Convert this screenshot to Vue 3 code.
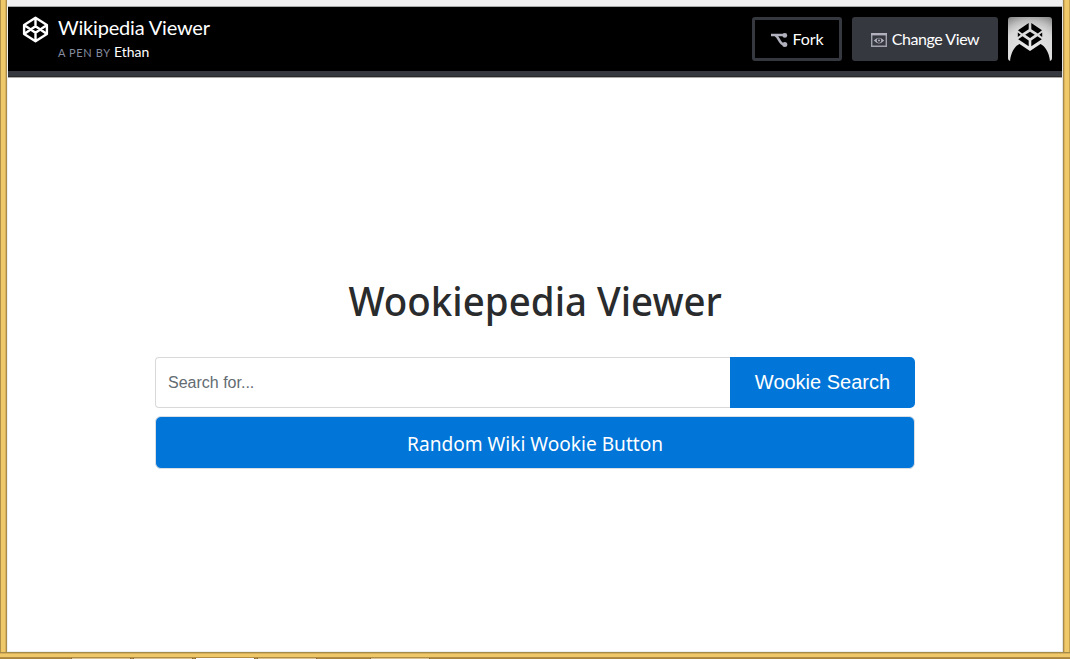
<script setup>
const tabs = [
  { gap: 64, active: false },
  { gap: 2, active: false },
  { gap: 2, active: true },
  { gap: 2, active: false },
  { gap: 53, active: false },
]
</script>

<template>
  <div class="window">
    <div class="body">
      <div class="edge left"></div>
      <div class="page">
        <div class="strip"></div>
        <header class="bar">
          <svg class="logo" width="27" height="27" viewBox="0 0 27 27">
            <path d="M13.5 1.7 L24.9 9 V18 L13.5 25.3 L2.1 18 V9 Z M2.1 9 L13.5 16.8 L24.9 9 M2.1 18 L13.5 10.2 L24.9 18 M13.5 1.7 V10.2 M13.5 16.8 V25.3" />
          </svg>
          <div class="titles">
            <div class="title">Wikipedia Viewer</div>
            <div class="byline"><span class="by">A PEN BY</span><span class="author">Ethan</span></div>
          </div>
          <button class="btn fork">
            <svg width="17" height="14" viewBox="0 0 17 14">
              <path class="wire" d="M0 2 H13 M4 2.2 C7.8 2.8 8 11 13 11.6" />
              <circle cx="13.8" cy="2.4" r="2.4" /><circle cx="13.8" cy="11.4" r="2.5" />
            </svg>
            <span>Fork</span>
          </button>
          <button class="btn view">
            <svg width="16" height="14" viewBox="0 0 16 14">
              <path class="box" d="M.7 1 H15.3 V13.2 H.7 Z" />
              <path d="M0 0 H16 V2.4 H0 Z" />
              <path class="lens" fill-rule="evenodd" d="M2.8 7.6 Q8 2 13.2 7.6 Q8 13.2 2.8 7.6 Z M8 5.3 A2.3 2.3 0 1 0 8 9.9 A2.3 2.3 0 1 0 8 5.3 Z" />
              <circle cx="8" cy="7.6" r="1" />
            </svg>
            <span>Change View</span>
          </button>
          <svg class="avatar" width="44" height="44" viewBox="0 0 44 44">
            <defs>
              <radialGradient id="glow" cx="22" cy="38" r="43" gradientUnits="userSpaceOnUse">
                <stop offset="0" stop-color="#ececec" /><stop offset=".65" stop-color="#d8d8d8" />
                <stop offset=".8" stop-color="#bdbdbd" /><stop offset="1" stop-color="#858585" />
              </radialGradient>
            </defs>
            <rect width="44" height="44" fill="url(#glow)" />
            <path d="M2 44 C3 35 7 29 11.5 27 L22 34 L32.5 27 C37 29 41 35 42 44 Z" />
            <path d="M20.7 6 V12.2 L14.2 16.5 L10 13.3 Z M23.3 6 V12.2 L29.8 16.5 L34 13.3 Z M9.8 15.4 L12.7 17.7 L9.8 19.9 Z M34.2 15.4 L31.3 17.7 L34.2 19.9 Z M22 14.8 L26.8 17.8 L22 20.9 L17.2 17.8 Z M10.2 22.3 L14.5 19.2 L20.7 23.4 V29.3 Z M33.8 22.3 L29.5 19.2 L23.3 23.4 V29.3 Z" />
          </svg>
        </header>
        <main class="content">
          <h1><span>Wookiepedia Viewer</span></h1>
          <div class="search">
            <input type="text" placeholder="Search for..." />
            <button>Wookie Search</button>
          </div>
          <button class="random"><span>Random Wiki Wookie Button</span></button>
        </main>
      </div>
      <div class="edge right"></div>
    </div>
    <div class="sill"></div>
    <div class="tabs">
      <i v-for="(tab, n) in tabs" :key="n" :class="{ active: tab.active }" :style="{ marginLeft: tab.gap + 'px' }"></i>
    </div>
  </div>
</template>

<style>
html, body { margin: 0; overflow: hidden; }
</style>

<style scoped>
* { box-sizing: border-box; }
.window { width: 1070px; height: 659px; display: flex; flex-direction: column; overflow: hidden; background: #efc869; }
.body { display: flex; height: 652px; }
.edge { width: 8px; flex: none; }
.left { background: linear-gradient(90deg, #b08f48 0 1px, #efc869 1px 5px, #d9b15c 5px 6px, #a68b4b 6px 7px, #f0f0ee 7px); }
.right { background: linear-gradient(90deg, #e4e4e4 0 1px, #a68b4b 1px 2px, #d9b15c 2px 3px, #efc869 3px 7px, #c7a24f 7px); }
.page { flex: 1; display: flex; flex-direction: column; background: #fff; border-bottom: 1px solid #eef1f4; }
.strip { height: 7px; background: #f0f0f0; border-bottom: 1px solid #a7a9a8; flex: none; }
.bar { height: 71px; flex: none; display: flex; align-items: flex-start; background: #000; padding: 10px 10px 0 14px; font-family: Lato, sans-serif; border-bottom: 1px solid #aaa9a4; box-shadow: inset 0 -1px #29292b, inset 0 -6px #363840; }
.logo { fill: none; stroke: #fff; stroke-width: 2.4; stroke-linejoin: round; margin-top: -1px; }
.titles { margin-left: 9px; flex: 1; }
.title { color: #fff; font-size: 20px; line-height: 24px; margin-top: -2px; letter-spacing: -.18px; white-space: nowrap; }
.byline { display: flex; align-items: baseline; line-height: 18px; margin-top: 4px; white-space: nowrap; }
.by { color: #868c9f; font-size: 11px; letter-spacing: .6px; width: 56px; }
.author { color: #fff; font-size: 14px; }
button { font: inherit; border: 0; color: #fff; padding: 0; }
.btn { height: 44px; display: flex; align-items: center; justify-content: center; gap: 5px; border-radius: 3px; font-size: 16px; margin-right: 10px; white-space: nowrap; }
.btn span { position: relative; top: -1px; }
.btn svg { fill: #b1b1be; position: relative; top: 1px; }
.fork { width: 90px; background: #000; border: 3px solid #363840; letter-spacing: -.15px; }
.view { width: 146px; background: #363840; letter-spacing: -.43px; }
.wire { fill: none; stroke: #b1b1be; stroke-width: 2.5; }
.box { fill: none; stroke: #a1a2ae; stroke-width: 1.4; }
.avatar { border-radius: 3px; }
.content { width: 760px; margin: 197px auto 0; font-family: "Noto Sans", sans-serif; }
h1 { margin: 0; height: 82px; line-height: 52px; font-size: 40px; font-weight: 500; text-align: center; color: #292b2c; white-space: nowrap; }
h1 span { display: inline-block; transform: scaleX(.962); }
.search { display: flex; height: 51px; font-family: "Liberation Sans", sans-serif; }
input { flex: 1; border: 1px solid #d9d9d9; border-right: 0; border-radius: 4px 0 0 4px; padding: 0 12px; font: 16px "Liberation Sans", sans-serif; outline: 0; }
input::placeholder { color: #636c72; opacity: 1; }
.search button { width: 185px; background: #0275d8; border-radius: 0 5px 5px 0; font-size: 20px; }
.random { width: 760px; height: 53px; margin-top: 8px; padding-top: 2px; background: #0275d8; border: 1px solid #d9dfe5; border-radius: 6px; font-size: 20px; }
.random span { display: inline-block; transform: scaleX(.955); }
.sill { height: 6px; background: linear-gradient(#a58a48 0 1px, #d5ae5b 1px 2px, #efc869 2px 5px, #b08c45 5px); }
.tabs { height: 1px; display: flex; background: #aa853d; padding-left: 7px; }
.tabs i { width: 60px; background: #d8c191; border: solid #85672e; border-width: 0 1px; }
.tabs i.active { background: #fff; }
</style>
